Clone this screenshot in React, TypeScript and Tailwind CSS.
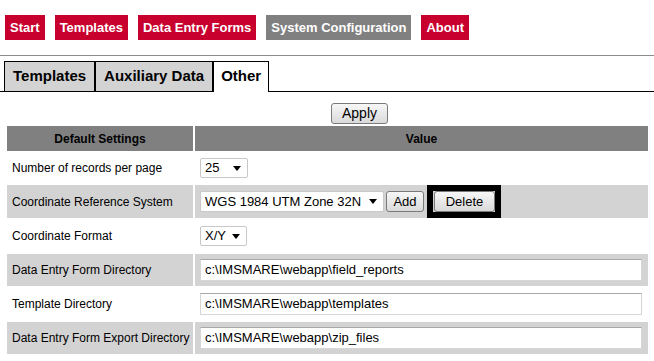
import React from "react"

const navItems = [
  { label: "Start", active: false },
  { label: "Templates", active: false },
  { label: "Data Entry Forms", active: false },
  { label: "System Configuration", active: true },
  { label: "About", active: false },
]

function Arrow() {
  return (
    <svg width="8" height="5" viewBox="0 0 8 5" className="shrink-0">
      <path d="M0 0 H8 L4 5 Z" fill="#000" />
    </svg>
  )
}

function FakeSelect({ value, className }: { value: string; className: string }) {
  return (
    <div
      className={
        "flex items-center justify-between rounded-[2px] border border-[#c8c8c8] bg-white pl-[4px] pr-[6px] text-[13px] text-black " +
        className
      }
    >
      <span>{value}</span>
      <Arrow />
    </div>
  )
}

function Btn({ children, className }: { children: React.ReactNode; className: string }) {
  return (
    <button
      className={
        "flex items-center justify-center rounded-[3px] border border-[#7a7a7a] bg-gradient-to-b from-[#f7f7f7] to-[#dadada] text-black " +
        className
      }
    >
      {children}
    </button>
  )
}

function PathInput({ value }: { value: string }) {
  return (
    <div className="flex h-[22px] w-[442px] items-center border border-[#d6d6d6] border-t-[#a8a8a8] bg-white pl-[4px] text-[13px] text-black">
      {value}
    </div>
  )
}

export default function App() {
  return (
    <div className="min-h-screen bg-white font-['Liberation_Sans',Arial,sans-serif]">
      {/* top navigation */}
      <nav className="flex gap-[10px] pl-[5px] pt-[15px]">
        {navItems.map((item) => (
          <div
            key={item.label}
            className={
              item.active
                ? "flex h-[25px] items-center bg-[#808080] px-[5px] text-[13px] font-bold text-white"
                : "flex h-[25px] items-center bg-[#c8002e] px-[5px] text-[13px] font-bold text-white"
            }
          >
            {item.label}
          </div>
        ))}
      </nav>

      <div className="mt-[15px] h-px bg-[#8c8c8c]" />

      {/* tabs */}
      <div className="mt-[5px] flex h-[31px] items-end border-b border-black pl-[4px]">
        <div className="flex h-[30px] items-center border border-b-0 border-black bg-[#d3d3d3] px-[8px] text-[15px] font-bold text-black">
          Templates
        </div>
        <div className="flex h-[30px] items-center border border-b-0 border-black bg-[#d3d3d3] px-[8px] text-[15px] font-bold text-black">
          Auxiliary Data
        </div>
        <div className="-mb-px flex h-[31px] items-center border border-b-0 border-black bg-white px-[7px] pb-px text-[15px] font-bold text-black">
          Other
        </div>
      </div>

      <div className="mt-[11px] pl-[331px]">
        <Btn className="h-[21px] w-[57px] text-[14px]">Apply</Btn>
      </div>

      {/* settings table */}
      <table className="ml-[5px] w-[645px] table-fixed border-separate border-spacing-[2px] text-[12px] text-black">
        <colgroup>
          <col className="w-[186px]" />
          <col />
        </colgroup>
        <thead>
          <tr className="h-[25px] bg-[#808080] font-bold">
            <th className="text-center">Default Settings</th>
            <th className="text-center">Value</th>
          </tr>
        </thead>
        <tbody>
          <tr className="h-[30px]">
            <td className="pl-[5px]">Number of records per page</td>
            <td className="pl-[5px]">
              <FakeSelect value="25" className="h-[20px] w-[48px]" />
            </td>
          </tr>
          <tr className="h-[33px] bg-[#d3d3d3]">
            <td className="pl-[5px]">Coordinate Reference System</td>
            <td className="pl-[5px]">
              <div className="flex items-center">
                <FakeSelect value="WGS 1984 UTM Zone 32N" className="h-[21px] w-[184px]" />
                <Btn className="ml-[2px] h-[21px] w-[38px] text-[13px]">Add</Btn>
                <div className="ml-[3px] border-[6px] border-black pl-px">
                  <Btn className="h-[21px] w-[61px] text-[13px]">Delete</Btn>
                </div>
              </div>
            </td>
          </tr>
          <tr className="h-[32px]">
            <td className="pl-[5px]">Coordinate Format</td>
            <td className="pl-[5px]">
              <FakeSelect value="X/Y" className="h-[20px] w-[47px]" />
            </td>
          </tr>
          <tr className="h-[32px] bg-[#d3d3d3]">
            <td className="pl-[5px]">Data Entry Form Directory</td>
            <td className="pl-[5px]">
              <PathInput value="c:\IMSMARE\webapp\field_reports" />
            </td>
          </tr>
          <tr className="h-[32px]">
            <td className="pl-[5px]">Template Directory</td>
            <td className="pl-[5px]">
              <PathInput value="c:\IMSMARE\webapp\templates" />
            </td>
          </tr>
          <tr className="h-[32px] bg-[#d3d3d3]">
            <td className="pl-[5px]">Data Entry Form Export Directory</td>
            <td className="pl-[5px]">
              <PathInput value="c:\IMSMARE\webapp\zip_files" />
            </td>
          </tr>
        </tbody>
      </table>
    </div>
  )
}
